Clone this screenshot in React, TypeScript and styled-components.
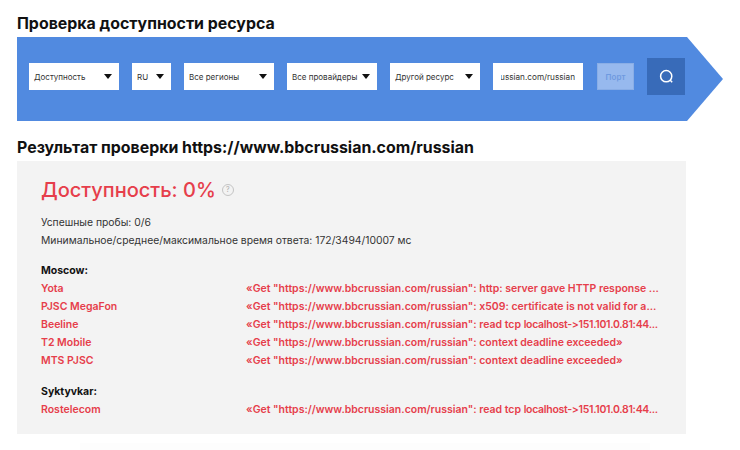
import React from 'react';
import styled, { createGlobalStyle } from 'styled-components';

const GlobalStyle = createGlobalStyle`
  html, body {
    margin: 0;
    padding: 0;
    background: #fff;
    font-family: Inter, "Open Sans", "Liberation Sans", sans-serif;
    font-variant-ligatures: none;
    font-feature-settings: "calt" 0;
  }
`;

const Page = styled.div`
  width: 740px;
  height: 450px;
  box-sizing: border-box;
  padding: 14px 0 0 17px;
  overflow: hidden;
`;

const Title = styled.h2`
  margin: 0;
  font-size: 15.9px;
  line-height: 20px;
  font-weight: 700;
  color: #111;
`;

const Banner = styled.div`
  width: 706px;
  height: 84px;
  margin: 3px 0 17px;
  box-sizing: border-box;
  padding: 0 0 5px 12px;
  display: flex;
  align-items: center;
  background: #518ae0;
  clip-path: polygon(0 0, 670px 0, 706px 42px, 670px 84px, 0 84px);
`;

const Select = styled.div<{ $w: number }>`
  width: ${(p) => p.$w}px;
  height: 27px;
  margin-right: 13px;
  box-sizing: border-box;
  padding: 0 5px;
  display: flex;
  align-items: center;
  justify-content: space-between;
  flex-shrink: 0;
  background: #fff;
  font-size: 8px;
  color: #333;
  white-space: nowrap;
`;

const Arrow = styled.span`
  width: 0;
  height: 0;
  flex-shrink: 0;
  margin-right: 2px;
  border-left: 4px solid transparent;
  border-right: 4px solid transparent;
  border-top: 5px solid #111;
`;

const UrlField = styled.div`
  width: 90px;
  height: 27px;
  margin-right: 14px;
  box-sizing: border-box;
  padding: 0 8px;
  display: flex;
  align-items: center;
  flex-shrink: 0;
  background: #fff;
`;

const UrlValue = styled.div`
  width: 100%;
  display: flex;
  justify-content: flex-end;
  overflow: hidden;
  font-size: 8.2px;
  color: #333;
  white-space: nowrap;
`;

const PortField = styled.div`
  width: 37px;
  height: 27px;
  margin-right: 13px;
  display: flex;
  align-items: center;
  justify-content: center;
  flex-shrink: 0;
  background: #97b9ee;
  border: 1px solid #8aaee6;
  box-sizing: border-box;
  font-size: 8px;
  font-weight: 600;
  color: #6f9ae0;
`;

const SearchButton = styled.button`
  width: 38px;
  height: 37px;
  padding: 0;
  border: 0;
  display: flex;
  align-items: center;
  justify-content: center;
  flex-shrink: 0;
  background: #386bb9;
`;

const Panel = styled.div`
  width: 669px;
  height: 273px;
  margin-top: 3px;
  box-sizing: border-box;
  padding: 16px 24px 0;
  background: #f3f3f3;
`;

const Status = styled.div`
  display: flex;
  align-items: center;
  gap: 6px;
  font-size: 20px;
  line-height: 26px;
  font-weight: 500;
  color: #e63e4b;
`;

const Help = styled.span`
  width: 10px;
  height: 10px;
  border: 1px solid #c4c4c4;
  border-radius: 50%;
  display: flex;
  align-items: center;
  justify-content: center;
  font-size: 7px;
  font-weight: 400;
  color: #aaa;
`;

const Summary = styled.div`
  margin-top: 10px;
  font-size: 10.35px;
  line-height: 18px;
  color: #333;
`;

const Group = styled.div<{ $top: number }>`
  margin-top: ${(p) => p.$top}px;
`;

const City = styled.div`
  font-size: 10.5px;
  line-height: 18px;
  font-weight: 700;
  color: #111;
`;

const Row = styled.div`
  display: grid;
  grid-template-columns: 205px 1fr;
  font-size: 10.5px;
  line-height: 18px;
  font-weight: 600;
  color: #e63e4b;
  white-space: nowrap;
`;

const Tail = styled.span`
  letter-spacing: -0.3px;
`;

const FooterFade = styled.div`
  width: 570px;
  height: 12px;
  margin: 9px 0 0 63px;
  background: #fdfdfd;
`;

const urlPrefix = '«Get "https://www.bbcrussian.com/russian": ';
const tcpTail = 'localhost->151.101.0.81:44...';

const moscow = [
  { name: 'Yota', message: 'http: server gave HTTP response ...' },
  { name: 'PJSC MegaFon', message: 'x509: certificate is not valid for a...' },
  { name: 'Beeline', message: 'read tcp ', tail: tcpTail },
  { name: 'T2 Mobile', message: 'context deadline exceeded»' },
  { name: 'MTS PJSC', message: 'context deadline exceeded»' },
];

const filters = [
  { label: 'Доступность', w: 90 },
  { label: 'RU', w: 39 },
  { label: 'Все регионы', w: 90 },
  { label: 'Все провайдеры', w: 90 },
  { label: 'Другой ресурс', w: 90 },
];

const App: React.FC = () => {
  return (
    <Page>
      <GlobalStyle />
      <Title>Проверка доступности ресурса</Title>
      <Banner>
        {filters.map((f) => (
          <Select key={f.label} $w={f.w}>
            {f.label}
            <Arrow />
          </Select>
        ))}
        <UrlField>
          <UrlValue>bbcrussian.com/russian</UrlValue>
        </UrlField>
        <PortField>Порт</PortField>
        <SearchButton aria-label="Поиск">
          <svg width="15" height="15" viewBox="0 0 15 15" fill="none" stroke="#fff" strokeWidth="1.5">
            <circle cx="7.2" cy="7.2" r="5.6" />
            <path d="M11 11l2.2 2.2" />
          </svg>
        </SearchButton>
      </Banner>
      <Title>Результат проверки https://www.bbcrussian.com/russian</Title>
      <Panel>
        <Status>
          Доступность: 0%
          <Help>?</Help>
        </Status>
        <Summary>
          Успешные пробы: 0/6
          <br />
          Минимальное/среднее/максимальное время ответа: 172/3494/10007 мс
        </Summary>
        <Group $top={13}>
          <City>Moscow:</City>
          {moscow.map((row) => (
            <Row key={row.name}>
              <span>{row.name}</span>
              <span>
                {urlPrefix}
                {row.message}
                {row.tail && <Tail>{row.tail}</Tail>}
              </span>
            </Row>
          ))}
        </Group>
        <Group $top={13}>
          <City>Syktyvkar:</City>
          <Row>
            <span>Rostelecom</span>
            <span>
              {urlPrefix}read tcp <Tail>{tcpTail}</Tail>
            </span>
          </Row>
        </Group>
      </Panel>
      <FooterFade />
    </Page>
  );
};

export default App;
